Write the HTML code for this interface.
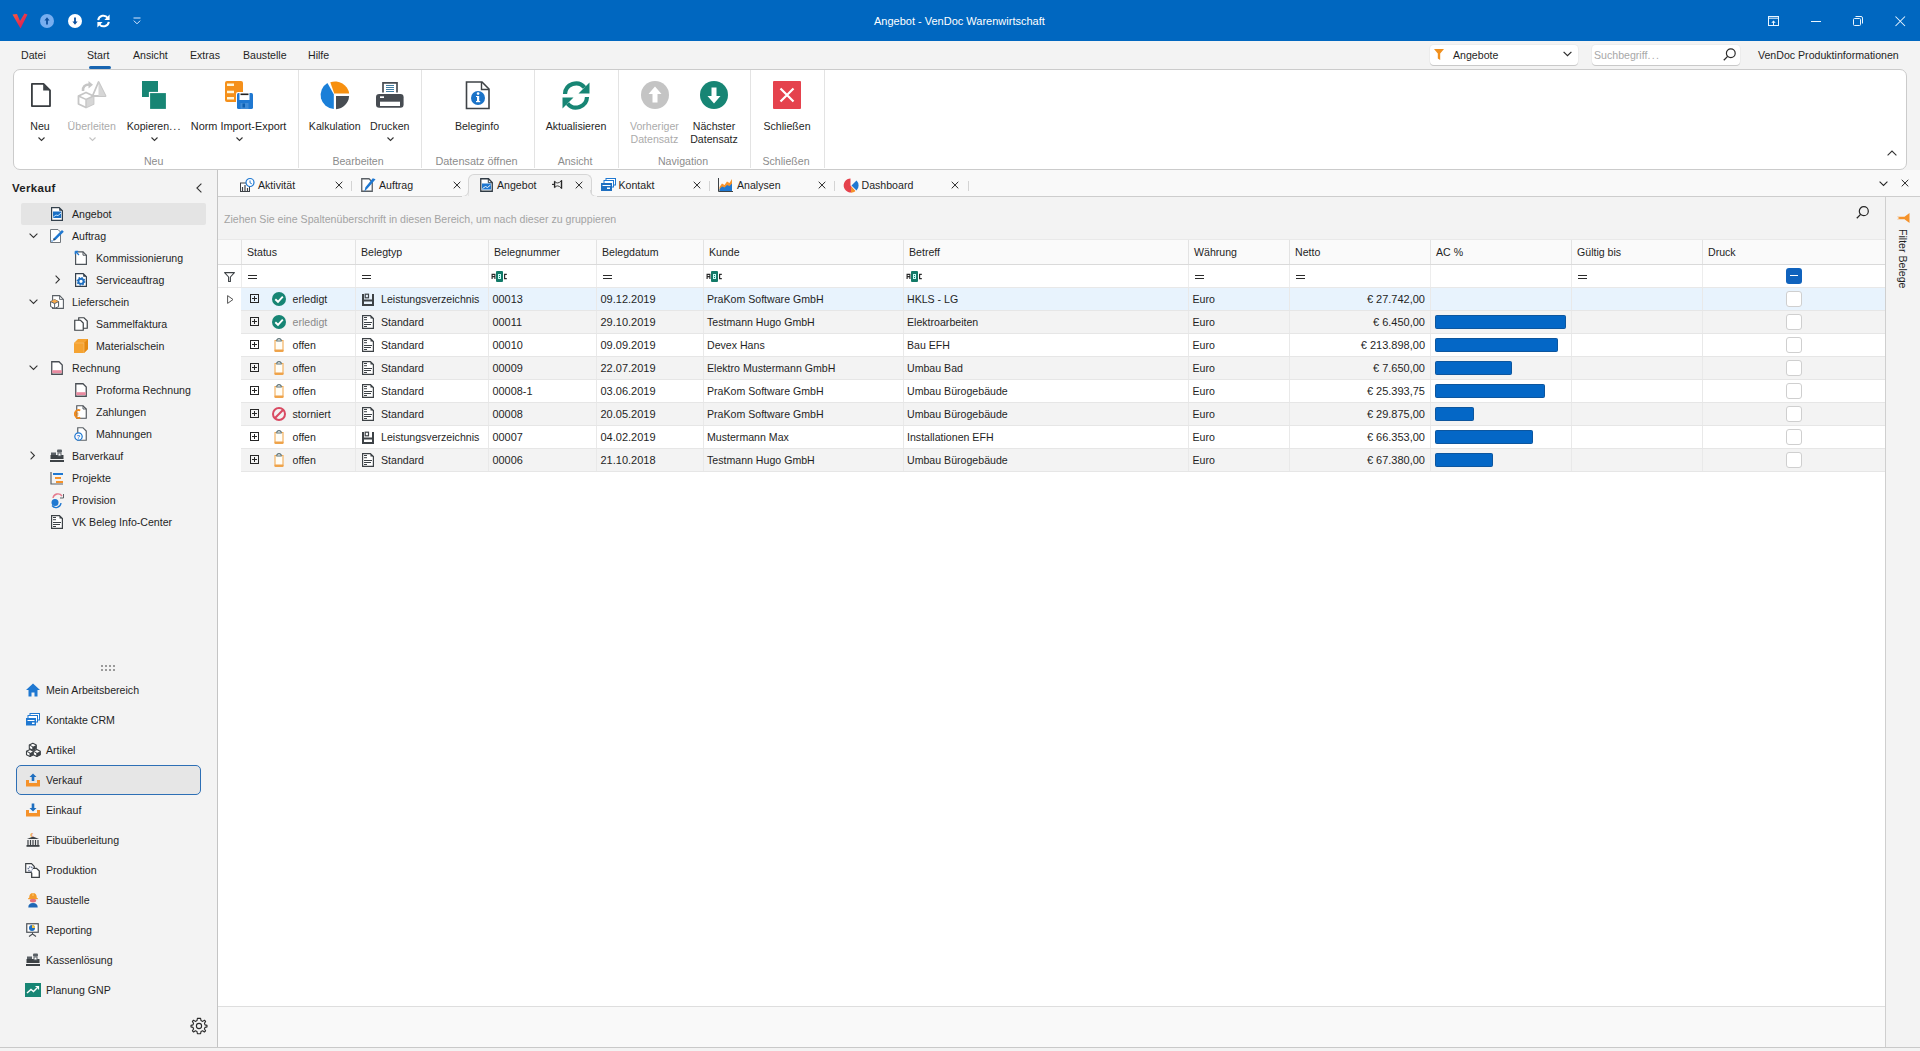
<!DOCTYPE html>
<html><head><meta charset="utf-8"><title>Angebot - VenDoc Warenwirtschaft</title>
<style>
html,body{margin:0;padding:0;}
body{width:1920px;height:1051px;overflow:hidden;position:relative;background:#f3f3f3;font-family:"Liberation Sans",sans-serif;}
.t{position:absolute;white-space:nowrap;}
.r{position:absolute;}
svg.r{overflow:visible;}
</style></head><body>

<div class="r" style="left:0px;top:0px;width:1920px;height:41px;background:#0067c0;"></div>
<svg class="r" style="left:12px;top:13px;" width="16" height="16" viewBox="0 0 16 16"><defs><linearGradient id="vg" x1="0" y1="0" x2="1" y2="1"><stop offset="0" stop-color="#ff5a3c"/><stop offset="1" stop-color="#d0105a"/></linearGradient></defs><path d="M0.5 1.5 L5 1 L8 8 L12.5 0.5 L15.5 1.5 L8.5 15.5 Z" fill="url(#vg)"/></svg>
<svg class="r" style="left:40px;top:14px;" width="14" height="14" viewBox="0 0 14 14"><circle cx="7" cy="7" r="7" fill="#77aef0"/><path d="M7 3.2 L9.6 6.6 H7.9 V10.6 H6.1 V6.6 H4.4 Z" fill="#0b4f9e"/></svg>
<svg class="r" style="left:68px;top:14px;" width="14" height="14" viewBox="0 0 14 14"><circle cx="7" cy="7" r="7" fill="#ffffff"/><path d="M7 10.8 L9.6 7.4 H7.9 V3.4 H6.1 V7.4 H4.4 Z" fill="#0b4f9e"/></svg>
<svg class="r" style="left:96px;top:14px;" width="15" height="14" viewBox="0 0 15 14"><path d="M2.2 6.2 A5.3 5.3 0 0 1 11.8 4" fill="none" stroke="#fff" stroke-width="2"/><path d="M13.6 0.6 L13.6 6 L8.4 6 Z" fill="#fff"/><path d="M12.8 7.8 A5.3 5.3 0 0 1 3.2 10" fill="none" stroke="#fff" stroke-width="2"/><path d="M1.4 13.4 L1.4 8 L6.6 8 Z" fill="#fff"/></svg>
<svg class="r" style="left:133px;top:17px;" width="8" height="8" viewBox="0 0 8 8"><path d="M0.5 1 H7.5" stroke="#dbe9ff" stroke-width="1"/><path d="M0.8 3.6 L4 6.8 L7.2 3.6" fill="none" stroke="#dbe9ff" stroke-width="1"/></svg>
<div class="t" style="left:874px;top:15.69px;font-size:11px;line-height:11px;color:#ffffff;">Angebot - VenDoc Warenwirtschaft</div>
<svg class="r" style="left:1768px;top:16px;" width="11" height="10" viewBox="0 0 11 10"><rect x="0.5" y="0.5" width="10" height="9" fill="none" stroke="#eaf6ff" stroke-width="1"/><path d="M0.5 2.2 H10.5" stroke="#eaf6ff"/><path d="M5.5 9.5 V5.2" stroke="#eaf6ff" stroke-width="1"/><path d="M3.3 6.8 L5.5 4.4 L7.7 6.8 Z" fill="#eaf6ff"/></svg>
<div class="r" style="left:1811px;top:21px;width:10px;height:1px;background:#eaf6ff;"></div>
<svg class="r" style="left:1853px;top:16px;" width="10" height="10" viewBox="0 0 10 10"><rect x="0.5" y="2.5" width="7" height="7" rx="1" fill="none" stroke="#eaf6ff"/><path d="M2.5 0.5 H8 A1.5 1.5 0 0 1 9.5 2 V7.5" fill="none" stroke="#eaf6ff"/></svg>
<svg class="r" style="left:1895px;top:16px;" width="10.5" height="10.5" viewBox="0 0 10.5 10.5"><path d="M0.5 0.5 L10 10 M10 0.5 L0.5 10" stroke="#eaf6ff" stroke-width="1.05"/></svg>
<div class="t" style="left:21px;top:50.03px;font-size:10.6px;line-height:10.6px;color:#1f1f1f;">Datei</div>
<div class="t" style="left:87px;top:50.03px;font-size:10.6px;line-height:10.6px;color:#1f1f1f;">Start</div>
<div class="t" style="left:133px;top:50.03px;font-size:10.6px;line-height:10.6px;color:#1f1f1f;">Ansicht</div>
<div class="t" style="left:190px;top:50.03px;font-size:10.6px;line-height:10.6px;color:#1f1f1f;">Extras</div>
<div class="t" style="left:243px;top:50.03px;font-size:10.6px;line-height:10.6px;color:#1f1f1f;">Baustelle</div>
<div class="t" style="left:308px;top:50.03px;font-size:10.6px;line-height:10.6px;color:#1f1f1f;">Hilfe</div>
<div class="r" style="left:89px;top:66px;width:22px;height:3px;background:#1764b0;border-radius:1.5px;"></div>
<div class="r" style="left:1430px;top:45px;width:148px;height:20px;background:#ffffff;border-radius:4px;box-shadow:0 1px 0 #c9c9c9, 0 0 0 1px #ececec;"></div>
<svg class="r" style="left:1434px;top:49px;" width="10" height="11" viewBox="0 0 10 11"><path d="M0 0 H10 L6.2 4.6 V11 L3.8 9.6 V4.6 Z" fill="#f0901e"/></svg>
<div class="t" style="left:1453px;top:50.03px;font-size:10.6px;line-height:10.6px;color:#1f1f1f;">Angebote</div>
<svg class="r" style="left:1563px;top:51px;" width="9" height="6" viewBox="0 0 9 6"><path d="M0.6 0.8 L4.5 4.7 L8.4 0.8" fill="none" stroke="#2b2b2b" stroke-width="1.2"/></svg>
<div class="r" style="left:1592px;top:45px;width:148px;height:20px;background:#ffffff;border-radius:4px;box-shadow:0 1px 0 #c9c9c9, 0 0 0 1px #ececec;"></div>
<div class="t" style="left:1594px;top:50.03px;font-size:10.6px;line-height:10.6px;color:#a8a8a8;">Suchbegriff<span style="letter-spacing:1.4px">...</span></div>
<svg class="r" style="left:1723px;top:48px;" width="13" height="13" viewBox="0 0 13 13"><circle cx="7.8" cy="5.2" r="4.4" fill="none" stroke="#2b2b2b" stroke-width="1.2"/><path d="M4.6 8.4 L0.8 12.2" stroke="#2b2b2b" stroke-width="1.3"/></svg>
<div class="t" style="left:1758px;top:50.03px;font-size:10.6px;line-height:10.6px;color:#1f1f1f;">VenDoc Produktinformationen</div>
<div class="r" style="left:13px;top:69px;width:1892px;height:99px;background:#ffffff;border:1px solid #cbcbcb;border-radius:7px;"></div>
<div class="r" style="left:298px;top:70px;width:1px;height:98px;background:#e3e3e3;"></div>
<div class="r" style="left:421px;top:70px;width:1px;height:98px;background:#e3e3e3;"></div>
<div class="r" style="left:534px;top:70px;width:1px;height:98px;background:#e3e3e3;"></div>
<div class="r" style="left:618px;top:70px;width:1px;height:98px;background:#e3e3e3;"></div>
<div class="r" style="left:750px;top:70px;width:1px;height:98px;background:#e3e3e3;"></div>
<div class="r" style="left:824px;top:70px;width:1px;height:98px;background:#e3e3e3;"></div>
<div class="t" style="left:-60px;width:200px;text-align:center;top:121.03px;font-size:10.6px;line-height:10.6px;color:#1f1f1f;">Neu</div>
<svg class="r" style="left:37.5px;top:137px;" width="7" height="4" viewBox="0 0 7 4"><path d="M0.5 0.5 L3.5 3.5 L6.5 0.5" fill="none" stroke="#333" stroke-width="1.1"/></svg>
<div class="t" style="left:-8.25px;width:200px;text-align:center;top:121.03px;font-size:10.6px;line-height:10.6px;color:#ababab;">Überleiten</div>
<svg class="r" style="left:88.5px;top:137px;" width="7" height="4" viewBox="0 0 7 4"><path d="M0.5 0.5 L3.5 3.5 L6.5 0.5" fill="none" stroke="#c4c4c4" stroke-width="1.1"/></svg>
<div class="t" style="left:54.30000000000001px;width:200px;text-align:center;top:121.03px;font-size:10.6px;line-height:10.6px;color:#1f1f1f;">Kopieren<span style="letter-spacing:1.3px">...</span></div>
<svg class="r" style="left:150.5px;top:137px;" width="7" height="4" viewBox="0 0 7 4"><path d="M0.5 0.5 L3.5 3.5 L6.5 0.5" fill="none" stroke="#333" stroke-width="1.1"/></svg>
<div class="t" style="left:138.6px;width:200px;text-align:center;top:120.77px;font-size:10.9px;line-height:10.9px;color:#1f1f1f;">Norm Import-Export</div>
<svg class="r" style="left:235.5px;top:137px;" width="7" height="4" viewBox="0 0 7 4"><path d="M0.5 0.5 L3.5 3.5 L6.5 0.5" fill="none" stroke="#333" stroke-width="1.1"/></svg>
<div class="t" style="left:53.69999999999999px;width:200px;text-align:center;top:156.03px;font-size:10.6px;line-height:10.6px;color:#8c8c8c;">Neu</div>
<div class="t" style="left:234.75px;width:200px;text-align:center;top:121.03px;font-size:10.6px;line-height:10.6px;color:#1f1f1f;">Kalkulation</div>
<div class="t" style="left:289.75px;width:200px;text-align:center;top:121.03px;font-size:10.6px;line-height:10.6px;color:#1f1f1f;">Drucken</div>
<svg class="r" style="left:386.5px;top:137px;" width="7" height="4" viewBox="0 0 7 4"><path d="M0.5 0.5 L3.5 3.5 L6.5 0.5" fill="none" stroke="#333" stroke-width="1.1"/></svg>
<div class="t" style="left:258px;width:200px;text-align:center;top:156.03px;font-size:10.6px;line-height:10.6px;color:#8c8c8c;">Bearbeiten</div>
<div class="t" style="left:377px;width:200px;text-align:center;top:121.03px;font-size:10.6px;line-height:10.6px;color:#1f1f1f;">Beleginfo</div>
<div class="t" style="left:376.5px;width:200px;text-align:center;top:155.77px;font-size:10.9px;line-height:10.9px;color:#8c8c8c;">Datensatz öffnen</div>
<div class="t" style="left:476px;width:200px;text-align:center;top:121.03px;font-size:10.6px;line-height:10.6px;color:#1f1f1f;">Aktualisieren</div>
<div class="t" style="left:475px;width:200px;text-align:center;top:156.03px;font-size:10.6px;line-height:10.6px;color:#8c8c8c;">Ansicht</div>
<div class="t" style="left:554.4px;width:200px;text-align:center;top:121.03px;font-size:10.6px;line-height:10.6px;color:#ababab;">Vorheriger</div>
<div class="t" style="left:554.4px;width:200px;text-align:center;top:134.03px;font-size:10.6px;line-height:10.6px;color:#ababab;">Datensatz</div>
<div class="t" style="left:614px;width:200px;text-align:center;top:121.03px;font-size:10.6px;line-height:10.6px;color:#1f1f1f;">Nächster</div>
<div class="t" style="left:614px;width:200px;text-align:center;top:134.03px;font-size:10.6px;line-height:10.6px;color:#1f1f1f;">Datensatz</div>
<div class="t" style="left:583px;width:200px;text-align:center;top:156.03px;font-size:10.6px;line-height:10.6px;color:#8c8c8c;">Navigation</div>
<div class="t" style="left:687px;width:200px;text-align:center;top:121.03px;font-size:10.6px;line-height:10.6px;color:#1f1f1f;">Schließen</div>
<div class="t" style="left:686px;width:200px;text-align:center;top:156.03px;font-size:10.6px;line-height:10.6px;color:#8c8c8c;">Schließen</div>
<svg class="r" style="left:1887px;top:150px;" width="10" height="6" viewBox="0 0 10 6"><path d="M0.6 5.4 L5 1 L9.4 5.4" fill="none" stroke="#333" stroke-width="1.1"/></svg>
<svg class="r" style="left:30px;top:83px;" width="22" height="25" viewBox="0 0 22 25"><path d="M1.9 0.9 H13.5 L20 7.4 V23.1 H1.9 Z" fill="#fff" stroke="#383c40" stroke-width="1.8" stroke-linejoin="round"/><path d="M13.2 0.5 L20.5 7.6 H13.2 Z" fill="#3f4448"/></svg>
<svg class="r" style="left:78px;top:81px;" width="28" height="28" viewBox="0 0 28 28"><path d="M8 11.5 L15.5 15 V23 L8 26.5 L0.5 23 V15 Z" fill="#fff" stroke="#c6c6c6" stroke-width="1.8" stroke-linejoin="round"/><path d="M8 18.5 L15.5 15 V23 L8 26.5 Z" fill="#d6d6d6"/><path d="M0.5 15 L8 18.5 L15.5 15 M8 18.5 V26.5" fill="none" stroke="#c6c6c6" stroke-width="1.4"/><path d="M20.5 1 L14.5 15 H27.5 Z" fill="#fff" stroke="#c6c6c6" stroke-width="1.8" stroke-linejoin="round"/><path d="M20.5 1 L27.5 15 H20.5 Z" fill="#d6d6d6"/><path d="M5 10 Q4.5 3.5 11.5 3.5" fill="none" stroke="#c6c6c6" stroke-width="2.6"/><path d="M10.5 0 L15 3.8 L10.5 7.5 Z" fill="#c6c6c6"/></svg>
<svg class="r" style="left:141px;top:81px;" width="26" height="29" viewBox="0 0 26 29"><rect x="1" y="0" width="16" height="16" fill="#178574"/><rect x="8.5" y="11.5" width="17" height="17" fill="#178574" stroke="#fff" stroke-width="1.2"/></svg>
<svg class="r" style="left:224px;top:81px;" width="30" height="29" viewBox="0 0 30 29"><rect x="1" y="0" width="18" height="21" rx="2" fill="#f5901a"/><rect x="3" y="2.5" width="7" height="2.5" fill="#fff6d8"/><rect x="3" y="9.7" width="7" height="2.5" fill="#fff6d8"/><rect x="3" y="16" width="7" height="2.5" fill="#fff6d8"/><rect x="12" y="11" width="18" height="18" rx="2" fill="#fff"/><rect x="13" y="12" width="16" height="16" rx="1.6" fill="#1f78d1"/><rect x="15.5" y="12" width="10" height="7" fill="#fff"/><rect x="16.5" y="12.5" width="8" height="1.6" fill="#222"/><rect x="16.5" y="22" width="8" height="6" fill="#fff" opacity="0.15"/><rect x="18.5" y="22.5" width="2.5" height="4" fill="#0d5fb0"/></svg>
<svg class="r" style="left:320px;top:81px;" width="30" height="29" viewBox="0 0 30 29"><path d="M13.8 13.3 L7.4 2 A14 14 0 0 0 13.8 28 Z" fill="#1a7fd8"/><path d="M14.2 12.6 L10.3 1.3 A14.2 14.2 0 0 1 29.2 12.6 Z" fill="#f7900f"/><path d="M16 15 H29.1 A14 14 0 0 1 16 28.2 Z" fill="#474c52"/></svg>
<svg class="r" style="left:375px;top:81px;" width="30" height="29" viewBox="0 0 30 29"><path d="M8 11.6 V1.9 H22 V11.6" fill="#fff" stroke="#474c52" stroke-width="1.7"/><rect x="11" y="4" width="8" height="0.9" fill="#2c6f98"/><rect x="11" y="6" width="8" height="0.9" fill="#2c6f98"/><rect x="11" y="8" width="8" height="0.9" fill="#2c6f98"/><rect x="11" y="10" width="8" height="0.9" fill="#2c6f98"/><rect x="1" y="13" width="27.6" height="13.8" rx="3.2" fill="#474c52"/><rect x="5" y="20.7" width="20" height="4.3" fill="#fff"/><rect x="5" y="15.3" width="4" height="1.7" fill="#fff"/></svg>
<svg class="r" style="left:465px;top:81px;" width="26" height="29" viewBox="0 0 26 29"><path d="M1.5 1 H17 L24 8 V27.5 H1.5 Z" fill="#fff" stroke="#3f4347" stroke-width="1.6"/><path d="M16.5 1 V8.5 H24" fill="none" stroke="#3f4347" stroke-width="1.4"/><circle cx="13" cy="17" r="7" fill="#1a73c8"/><rect x="12" y="15" width="2.2" height="6" fill="#fff"/><rect x="11" y="20" width="4.2" height="1.2" fill="#fff"/><rect x="11" y="15" width="2" height="1" fill="#fff"/><circle cx="13.1" cy="12.6" r="1.3" fill="#fff"/></svg>
<svg class="r" style="left:561px;top:81px;" width="30" height="29" viewBox="0 0 30 29"><path d="M4 13 A11 11 0 0 1 23.5 6.5" fill="none" stroke="#178574" stroke-width="4.2"/><path d="M28.5 1.5 V12.5 H17.5 Z" fill="#178574"/><path d="M26 16 A11 11 0 0 1 6.5 22.5" fill="none" stroke="#178574" stroke-width="4.2"/><path d="M1.5 27.5 V16.5 H12.5 Z" fill="#178574"/></svg>
<svg class="r" style="left:641px;top:81px;" width="28" height="28" viewBox="0 0 28 28"><circle cx="14" cy="14" r="14" fill="#c4c4c4"/><path d="M14 5.5 L20.5 13 H16.5 V21.5 H11.5 V13 H7.5 Z" fill="#fff"/></svg>
<svg class="r" style="left:700px;top:81px;" width="28" height="28" viewBox="0 0 28 28"><circle cx="14" cy="14" r="14" fill="#178574"/><path d="M14 22.5 L20.5 15 H16.5 V6.5 H11.5 V15 H7.5 Z" fill="#fff"/></svg>
<svg class="r" style="left:773px;top:81px;" width="28" height="28" viewBox="0 0 28 28"><rect x="0" y="0" width="28" height="28" rx="1" fill="#e5424d"/><path d="M7.5 7.5 L20.5 20.5 M20.5 7.5 L7.5 20.5" stroke="#fff" stroke-width="2.2"/></svg>
<div class="r" style="left:217px;top:170px;width:1px;height:877px;background:#c4c4c4;"></div>
<div class="t" style="left:12px;top:183.27px;font-size:11.5px;line-height:11.5px;color:#1f1f1f;font-weight:bold;letter-spacing:0.3px;">Verkauf</div>
<svg class="r" style="left:196px;top:183px;" width="6" height="10" viewBox="0 0 6 10"><path d="M5.4 0.6 L0.9 5 L5.4 9.4" fill="none" stroke="#333" stroke-width="1.1"/></svg>
<div class="r" style="left:21px;top:203px;width:185px;height:22px;background:#e4e4e4;border-radius:2px;"></div>
<svg class="r" style="left:51px;top:207px;" width="13" height="14" viewBox="0 0 13 14"><path d="M0.6 0.6 H8.2 L11.4 3.8 V13.4 H0.6 Z" fill="#fff" stroke="#34404c" stroke-width="1.2"/><path d="M8.2 0.6 L11.4 3.8 H8.2 Z" fill="#34404c"/><rect x="2" y="4.5" width="8.2" height="6.5" fill="#1a6fc4"/><path d="M2.2 10.2 L5 8 L7 8.6 L10 6" stroke="#bfe3ff" stroke-width="1" fill="none"/></svg>
<div class="t" style="left:72px;top:209.03px;font-size:10.6px;line-height:10.6px;color:#1f1f1f;">Angebot</div>
<svg class="r" style="left:29px;top:233px;" width="9" height="5" viewBox="0 0 9 5"><path d="M0.6 0.6 L4.5 4.4 L8.4 0.6" fill="none" stroke="#333" stroke-width="1.1"/></svg>
<svg class="r" style="left:50px;top:229px;" width="15" height="14" viewBox="0 0 15 14"><path d="M0.5 0.5 H8 L10.5 3 V13.5 H0.5 Z" fill="#fff" stroke="#70767c" stroke-width="1"/><path d="M13.8 2.8 L5.5 11 L3.2 11.6 L3.8 9.3 L12 1 Z" fill="#1f78d1"/><path d="M3.8 9.3 L3.2 11.6 L5.5 11 Z" fill="#3d4246"/><circle cx="2" cy="12" r="0.8" fill="#1f78d1"/></svg>
<div class="t" style="left:72px;top:231.03px;font-size:10.6px;line-height:10.6px;color:#1f1f1f;">Auftrag</div>
<svg class="r" style="left:75px;top:251px;" width="13" height="14" viewBox="0 0 13 14"><path d="M1.6 0.8 H8 L11.4 4.2 V13.4 H0.6 V2" fill="#fff" stroke="#4f555b" stroke-width="1.2"/><path d="M8 0.8 V4.2 H11.4" fill="none" stroke="#4f555b" stroke-width="1"/><path d="M0.3 0.3 L4 4 M0.3 0.3 H3.2 M0.3 0.3 V3.2" stroke="#1f78d1" stroke-width="1.3" fill="none"/></svg>
<div class="t" style="left:96px;top:253.03px;font-size:10.6px;line-height:10.6px;color:#1f1f1f;">Kommissionierung</div>
<svg class="r" style="left:55px;top:275px;" width="5" height="9" viewBox="0 0 5 9"><path d="M0.6 0.6 L4.4 4.5 L0.6 8.4" fill="none" stroke="#333" stroke-width="1.1"/></svg>
<svg class="r" style="left:75px;top:273px;" width="13" height="14" viewBox="0 0 13 14"><path d="M0.6 0.6 H8.2 L11.4 3.8 V13.4 H0.6 Z" fill="#fff" stroke="#34404c" stroke-width="1.2"/><path d="M8.2 0.6 L11.4 3.8 H8.2 Z" fill="#34404c"/><circle cx="6" cy="8.3" r="2.6" fill="none" stroke="#1f6fc0" stroke-width="1.9"/><circle cx="6" cy="8.3" r="3.7" fill="none" stroke="#1f6fc0" stroke-width="1.4" stroke-dasharray="1.4 1.5"/></svg>
<div class="t" style="left:96px;top:275.03px;font-size:10.6px;line-height:10.6px;color:#1f1f1f;">Serviceauftrag</div>
<svg class="r" style="left:29px;top:299px;" width="9" height="5" viewBox="0 0 9 5"><path d="M0.6 0.6 L4.5 4.4 L8.4 0.6" fill="none" stroke="#333" stroke-width="1.1"/></svg>
<svg class="r" style="left:50px;top:295px;" width="14" height="14" viewBox="0 0 14 14"><path d="M2.6 0.6 H9.6 L13.4 4.4 V13.4 H2.6 Z" fill="#fff" stroke="#5a6066" stroke-width="1.1"/><path d="M9.6 0.6 V4.4 H13.4" fill="none" stroke="#5a6066" stroke-width="0.9"/><path d="M0.6 6.6 L4.6 4.6 L8.6 6.6 V11.6 L4.6 13.4 L0.6 11.6 Z" fill="#fff" stroke="#4f555b" stroke-width="1"/><path d="M0.6 6.6 L4.6 4.6 L8.6 6.6 L4.6 8.6 Z" fill="#f5a84a"/><path d="M0.6 6.6 L4.6 8.6 L8.6 6.6 M4.6 8.6 V13.4" stroke="#4f555b" stroke-width="0.9" fill="none"/></svg>
<div class="t" style="left:72px;top:297.03px;font-size:10.6px;line-height:10.6px;color:#1f1f1f;">Lieferschein</div>
<svg class="r" style="left:74px;top:317px;" width="14" height="14" viewBox="0 0 14 14"><path d="M4.75 0.75 H10 L13.25 4 V11.25 H4.75 Z" fill="#fff" stroke="#3d4246" stroke-width="1.2"/><path d="M0.75 3.25 H6.5 L9.25 6 V13.25 H0.75 Z" fill="#fff" stroke="#3d4246" stroke-width="1.2"/></svg>
<div class="t" style="left:96px;top:319.03px;font-size:10.6px;line-height:10.6px;color:#1f1f1f;">Sammelfaktura</div>
<svg class="r" style="left:74px;top:339px;" width="14" height="14" viewBox="0 0 14 14"><path d="M0 4 L4 0 H14 L14 10 L10 14 H0 Z" fill="#f5a331"/><path d="M10 4 L14 0 V10 L10 14 Z" fill="#e58a12"/><path d="M0 4 H10 V14" fill="none" stroke="#f9c278" stroke-width="0.6"/></svg>
<div class="t" style="left:96px;top:341.03px;font-size:10.6px;line-height:10.6px;color:#1f1f1f;">Materialschein</div>
<svg class="r" style="left:29px;top:365px;" width="9" height="5" viewBox="0 0 9 5"><path d="M0.6 0.6 L4.5 4.4 L8.4 0.6" fill="none" stroke="#333" stroke-width="1.1"/></svg>
<svg class="r" style="left:51px;top:361px;" width="12" height="14" viewBox="0 0 12 14"><path d="M0.75 0.75 H8 L11.25 4 V13.25 H0.75 Z" fill="#fff" stroke="#4a4f55" stroke-width="1.3"/><rect x="1.3" y="9.2" width="9.4" height="2.9" fill="#e98aa0"/></svg>
<div class="t" style="left:72px;top:363.03px;font-size:10.6px;line-height:10.6px;color:#1f1f1f;">Rechnung</div>
<svg class="r" style="left:75px;top:383px;" width="12" height="14" viewBox="0 0 12 14"><path d="M0.75 0.75 H8 L11.25 4 V13.25 H0.75 Z" fill="#fff" stroke="#4a4f55" stroke-width="1.3"/><rect x="1.3" y="9.2" width="9.4" height="2.9" fill="#e98aa0"/></svg>
<div class="t" style="left:96px;top:385.03px;font-size:10.6px;line-height:10.6px;color:#1f1f1f;">Proforma Rechnung</div>
<svg class="r" style="left:74px;top:405px;" width="14" height="14" viewBox="0 0 14 14"><path d="M2.75 0.75 H9 L12.25 4 V13.25 H2.75 Z" fill="#fff" stroke="#4a4f55" stroke-width="1.1"/><path d="M9 0.75 V4 H12.25" fill="none" stroke="#4a4f55" stroke-width="0.9"/><path d="M6.2 5.6 A3.4 4 0 1 0 6.2 12.4" fill="none" stroke="#f08a1c" stroke-width="1.8"/><path d="M0 8.2 H4.4 M0 10 H4.4" stroke="#f08a1c" stroke-width="1"/></svg>
<div class="t" style="left:96px;top:407.03px;font-size:10.6px;line-height:10.6px;color:#1f1f1f;">Zahlungen</div>
<svg class="r" style="left:74px;top:427px;" width="14" height="14" viewBox="0 0 14 14"><path d="M3.75 0.75 H9 L12.25 4 V13.25 H3.75 Z" fill="#fff" stroke="#5a6066" stroke-width="1.2"/><circle cx="4.5" cy="9.5" r="3.7" fill="#fff" stroke="#1f78d1" stroke-width="1.2"/><text x="2.6" y="12" font-family="Liberation Sans" font-weight="bold" font-size="6" fill="#1f78d1">?</text></svg>
<div class="t" style="left:96px;top:429.03px;font-size:10.6px;line-height:10.6px;color:#1f1f1f;">Mahnungen</div>
<svg class="r" style="left:30px;top:451px;" width="5" height="9" viewBox="0 0 5 9"><path d="M0.6 0.6 L4.4 4.5 L0.6 8.4" fill="none" stroke="#333" stroke-width="1.1"/></svg>
<svg class="r" style="left:50px;top:449px;" width="14" height="13" viewBox="0 0 14 13"><rect x="7" y="0.5" width="5" height="3" rx="1" fill="#5a6066"/><rect x="1" y="3.5" width="5" height="4" fill="#5a6066"/><path d="M0.5 6 H13.5 V10 H0.5 Z" fill="#3d4246"/><rect x="0" y="11" width="14" height="2" fill="#3d4246"/><rect x="8" y="4" width="3" height="3" fill="#fff" stroke="#5a6066"/></svg>
<div class="t" style="left:72px;top:451.03px;font-size:10.6px;line-height:10.6px;color:#1f1f1f;">Barverkauf</div>
<svg class="r" style="left:50px;top:471px;" width="14" height="14" viewBox="0 0 14 14"><path d="M1 1 V13 H13" fill="none" stroke="#5a6066" stroke-width="1.2"/><rect x="3" y="2" width="10" height="2" fill="#1f78d1"/><rect x="5" y="6" width="6" height="2" fill="#f5922a"/><rect x="6" y="10" width="7" height="2" fill="#f5922a"/></svg>
<div class="t" style="left:72px;top:473.03px;font-size:10.6px;line-height:10.6px;color:#1f1f1f;">Projekte</div>
<svg class="r" style="left:50px;top:493px;" width="14" height="14" viewBox="0 0 14 14"><path d="M3 5 A5 5 0 0 1 12 3" fill="none" stroke="#e5788c" stroke-width="1.3"/><path d="M13.5 1 V5 H10" fill="none" stroke="#5a6066" stroke-width="1"/><circle cx="5" cy="9.5" r="3.5" fill="#1f78d1"/><path d="M2 12.5 A5 5 0 0 0 11 10" fill="none" stroke="#1f78d1" stroke-width="1.3"/></svg>
<div class="t" style="left:72px;top:495.03px;font-size:10.6px;line-height:10.6px;color:#1f1f1f;">Provision</div>
<svg class="r" style="left:51px;top:515px;" width="12" height="14" viewBox="0 0 12 14"><path d="M0.6 0.6 H8.4 L11.4 3.6 V13.4 H0.6 Z" fill="#fff" stroke="#3d4246" stroke-width="1.2"/><path d="M8.5 0.5 L11.5 3.5 L8.5 3.5 Z" fill="#3d4246"/><rect x="2" y="2" width="3" height="1" fill="#3d4246"/><rect x="2" y="4.2" width="3" height="1" fill="#3d4246"/><rect x="2" y="7" width="8" height="1" fill="#3d4246"/><rect x="2" y="9" width="7" height="1" fill="#3d4246"/><rect x="2" y="11" width="3" height="1" fill="#3d4246"/></svg>
<div class="t" style="left:72px;top:517.03px;font-size:10.6px;line-height:10.6px;color:#1f1f1f;">VK Beleg Info-Center</div>
<div class="r" style="left:101px;top:665px;width:1.5px;height:1.5px;background:#9a9a9a;"></div>
<div class="r" style="left:105px;top:665px;width:1.5px;height:1.5px;background:#9a9a9a;"></div>
<div class="r" style="left:109px;top:665px;width:1.5px;height:1.5px;background:#9a9a9a;"></div>
<div class="r" style="left:113px;top:665px;width:1.5px;height:1.5px;background:#9a9a9a;"></div>
<div class="r" style="left:101px;top:669px;width:1.5px;height:1.5px;background:#9a9a9a;"></div>
<div class="r" style="left:105px;top:669px;width:1.5px;height:1.5px;background:#9a9a9a;"></div>
<div class="r" style="left:109px;top:669px;width:1.5px;height:1.5px;background:#9a9a9a;"></div>
<div class="r" style="left:113px;top:669px;width:1.5px;height:1.5px;background:#9a9a9a;"></div>
<div class="r" style="left:16px;top:765px;width:183px;height:28px;background:#e6e6e6;border:1px solid #2d6fb5;border-radius:5px;"></div>
<svg class="r" style="left:26px;top:683px;" width="14" height="14" viewBox="0 0 14 14"><path d="M7 0.5 L14 7 H11.5 V13.5 H8.5 V9.5 H5.5 V13.5 H2.5 V7 H0 Z" fill="#1f78d1"/></svg>
<div class="t" style="left:46px;top:685.03px;font-size:10.6px;line-height:10.6px;color:#1f1f1f;">Mein Arbeitsbereich</div>
<svg class="r" style="left:26px;top:713px;" width="14" height="13" viewBox="0 0 14 13"><rect x="4" y="0.5" width="9.5" height="6.5" fill="#fff" stroke="#1f78d1"/><rect x="2" y="2.5" width="9.5" height="6.5" fill="#fff" stroke="#1f78d1"/><rect x="0" y="5" width="10" height="7.5" fill="#1f78d1"/><rect x="1.5" y="7" width="7" height="1" fill="#fff"/><rect x="6" y="9.5" width="2.5" height="1.5" fill="#fff"/></svg>
<div class="t" style="left:46px;top:715.03px;font-size:10.6px;line-height:10.6px;color:#1f1f1f;">Kontakte CRM</div>
<svg class="r" style="left:26px;top:743px;" width="15" height="14" viewBox="0 0 15 14"><path d="M6.8 0.3 L10.3 2.05 V5.55 L6.8 7.3 L3.3 5.55 V2.05 Z" fill="#fff" stroke="#3d4246" stroke-width="1.1" stroke-linejoin="round"/><path d="M6.8 3.8 L10.3 2.05 V5.55 L6.8 7.3 Z" fill="#3d4246"/><path d="M3.3 2.05 L6.8 3.8 V7.3" stroke="#3d4246" stroke-width="1" fill="none"/><path d="M4.0 6.5 L7.5 8.25 V11.75 L4.0 13.5 L0.5 11.75 V8.25 Z" fill="#fff" stroke="#3d4246" stroke-width="1.1" stroke-linejoin="round"/><path d="M4.0 10.0 L7.5 8.25 V11.75 L4.0 13.5 Z" fill="#3d4246"/><path d="M0.5 8.25 L4.0 10.0 V13.5" stroke="#3d4246" stroke-width="1" fill="none"/><path d="M10.8 6.5 L14.3 8.25 V11.75 L10.8 13.5 L7.3 11.75 V8.25 Z" fill="#fff" stroke="#3d4246" stroke-width="1.1" stroke-linejoin="round"/><path d="M10.8 10.0 L14.3 8.25 V11.75 L10.8 13.5 Z" fill="#3d4246"/><path d="M7.3 8.25 L10.8 10.0 V13.5" stroke="#3d4246" stroke-width="1" fill="none"/></svg>
<div class="t" style="left:46px;top:745.03px;font-size:10.6px;line-height:10.6px;color:#1f1f1f;">Artikel</div>
<svg class="r" style="left:26px;top:773px;" width="14" height="14" viewBox="0 0 14 14"><path d="M0 7 H3 V10 H11 V7 H14 V13.5 H0 Z" fill="#f5922a"/><path d="M7 0.5 L10.5 4 H8.3 V8 H5.7 V4 H3.5 Z" fill="#1f6fc0"/></svg>
<div class="t" style="left:46px;top:775.03px;font-size:10.6px;line-height:10.6px;color:#1f1f1f;">Verkauf</div>
<svg class="r" style="left:26px;top:803px;" width="14" height="14" viewBox="0 0 14 14"><path d="M0 7 H3 V10 H11 V7 H14 V13.5 H0 Z" fill="#f5922a"/><path d="M7 8.5 L10.5 5 H8.3 V0.5 H5.7 V5 H3.5 Z" fill="#1f6fc0"/></svg>
<div class="t" style="left:46px;top:805.03px;font-size:10.6px;line-height:10.6px;color:#1f1f1f;">Einkauf</div>
<svg class="r" style="left:26px;top:833px;" width="14" height="14" viewBox="0 0 14 14"><path d="M1 6 L7 3.5 L13 6 Z" fill="#3d4246"/><path d="M2 7 V12 M4.5 7 V12 M7 7 V12 M9.5 7 V12 M12 7 V12" stroke="#3d4246" stroke-width="1.2"/><rect x="0.5" y="12" width="13" height="1.8" fill="#3d4246"/><text x="4.5" y="4" font-family="Liberation Sans" font-size="5" fill="#f08a1c">€</text></svg>
<div class="t" style="left:46px;top:835.03px;font-size:10.6px;line-height:10.6px;color:#1f1f1f;">Fibuüberleitung</div>
<svg class="r" style="left:25px;top:863px;" width="15" height="15" viewBox="0 0 15 15"><path d="M0.7 0.7 H6.5 L9.3 3.5 V9.3 H0.7 Z" fill="#fff" stroke="#3d4246" stroke-width="1.2"/><circle cx="5.5" cy="6" r="2.2" fill="none" stroke="#6b7a9a" stroke-width="1.6" stroke-dasharray="1.2 0.8"/><path d="M8 5.3 H11.5 L14.3 8.1 V14.3 H6.7 V9.8" fill="#fff" stroke="#3d4246" stroke-width="1.3"/></svg>
<div class="t" style="left:46px;top:865.03px;font-size:10.6px;line-height:10.6px;color:#1f1f1f;">Produktion</div>
<svg class="r" style="left:28px;top:892px;" width="11" height="16" viewBox="0 0 11 16"><path d="M1.2 6 Q1.2 1 5 1 Q8.8 1 8.8 6 H9.8 V7.2 H0.2 V6 Z" fill="#f39a2a"/><path d="M4.3 1 H5.7 V4 H4.3 Z" fill="#f7c066"/><ellipse cx="5" cy="8.6" rx="3.2" ry="1.9" fill="#e5707a"/><path d="M0.3 15.5 Q0.3 11 5 11 Q9.7 11 9.7 15.5 Z" fill="#1f67b5"/></svg>
<div class="t" style="left:46px;top:895.03px;font-size:10.6px;line-height:10.6px;color:#1f1f1f;">Baustelle</div>
<svg class="r" style="left:26px;top:923px;" width="13" height="14" viewBox="0 0 13 14"><rect x="0.75" y="0.75" width="11.5" height="8.5" fill="#fff" stroke="#4a4f55" stroke-width="1.2"/><circle cx="6" cy="5" r="3" fill="#1f6fc0"/><path d="M6 5 V2 A3 3 0 0 1 9 5 Z" fill="#f5c342"/><path d="M6.5 9.5 V11 M3 13.5 L6.5 11 L10 13.5" stroke="#4a4f55" stroke-width="1.1" fill="none"/></svg>
<div class="t" style="left:46px;top:925.03px;font-size:10.6px;line-height:10.6px;color:#1f1f1f;">Reporting</div>
<svg class="r" style="left:26px;top:953px;" width="14" height="13" viewBox="0 0 14 13"><rect x="7" y="0.5" width="5" height="3" rx="1" fill="#5a6066"/><rect x="1" y="3.5" width="5" height="4" fill="#5a6066"/><path d="M0.5 6 H13.5 V10 H0.5 Z" fill="#3d4246"/><rect x="0" y="11" width="14" height="2" fill="#3d4246"/><rect x="8" y="4" width="3" height="3" fill="#fff" stroke="#5a6066"/></svg>
<div class="t" style="left:46px;top:955.03px;font-size:10.6px;line-height:10.6px;color:#1f1f1f;">Kassenlösung</div>
<svg class="r" style="left:25px;top:983px;" width="16" height="14" viewBox="0 0 16 14"><rect x="0" y="0" width="16" height="14" fill="#178574"/><path d="M2 10 L6 6.5 L8.5 8.5 L13 4" fill="none" stroke="#fff" stroke-width="1.4"/><path d="M10.5 3.5 H13.5 V6.5" fill="none" stroke="#fff" stroke-width="1.2"/></svg>
<div class="t" style="left:46px;top:985.03px;font-size:10.6px;line-height:10.6px;color:#1f1f1f;">Planung GNP</div>
<svg class="r" style="left:190px;top:1017px;" width="18" height="18" viewBox="0 0 18 18"><path d="M9 1.2 L10.6 1.4 L11 3.6 L12.6 4.4 L14.5 3.2 L15.6 4.4 L14.5 6.3 L15 7.9 L17 8.4 V9.9 L15 10.4 L14.4 12 L15.6 13.8 L14.4 15 L12.6 13.8 L11 14.6 L10.6 16.7 H9 H7.4 L7 14.6 L5.4 13.8 L3.6 15 L2.4 13.8 L3.6 12 L3 10.4 L1 9.9 V8.4 L3 7.9 L3.5 6.3 L2.4 4.4 L3.5 3.2 L5.4 4.4 L7 3.6 L7.4 1.4 Z" fill="none" stroke="#2b2b2b" stroke-width="1.1" stroke-linejoin="round"/><circle cx="9" cy="9" r="2.6" fill="none" stroke="#2b2b2b" stroke-width="1.1"/></svg>
<div class="r" style="left:218px;top:170px;width:1702px;height:26px;background:#f9f9f9;"></div>
<div class="r" style="left:218px;top:196px;width:1702px;height:1px;background:#cdcdcd;"></div>
<div class="r" style="left:468px;top:174px;width:122px;height:23px;background:#f3f3f3;border:1px solid #d6d6d6;border-bottom:none;border-radius:6px 6px 0 0;"></div>
<svg class="r" style="left:462px;top:190px;" width="7" height="7" viewBox="0 0 7 7"><path d="M0 6.5 Q6.5 6.5 6.5 0 V7 H0 Z" fill="#f3f3f3"/><path d="M0 6.5 Q6.5 6.5 6.5 0" fill="none" stroke="#d6d6d6"/></svg>
<svg class="r" style="left:590px;top:190px;" width="7" height="7" viewBox="0 0 7 7"><path d="M7 6.5 Q0.5 6.5 0.5 0 V7 H7 Z" fill="#f3f3f3"/><path d="M7 6.5 Q0.5 6.5 0.5 0" fill="none" stroke="#d6d6d6"/></svg>
<div class="r" style="left:462px;top:196px;width:135px;height:1px;background:#f3f3f3;"></div>
<svg class="r" style="left:240px;top:178px;" width="15" height="14" viewBox="0 0 15 14"><rect x="0.5" y="5" width="9" height="8.5" fill="#fff" stroke="#3d4246"/><path d="M2.5 13 V9 M5 13 V7 M7.5 13 V10" stroke="#3d4246" stroke-width="1.2"/><circle cx="10" cy="4.5" r="4" fill="#fff" stroke="#1f78d1" stroke-width="1.2"/><path d="M10 2.5 V4.8 L11.8 5.8" stroke="#1f78d1" fill="none"/></svg>
<div class="t" style="left:258px;top:179.53px;font-size:10.6px;line-height:10.6px;color:#1f1f1f;">Aktivität</div>
<svg class="r" style="left:335px;top:181px;" width="8" height="8" viewBox="0 0 8 8"><path d="M0.7 0.8 L7.3 7.4 M7.3 0.8 L0.7 7.4" stroke="#262626" stroke-width="1"/></svg>
<div class="r" style="left:351px;top:181px;width:1px;height:10px;background:#d4d4d4;"></div>
<svg class="r" style="left:361px;top:178px;" width="15" height="14" viewBox="0 0 15 14"><path d="M0.75 0.75 H8 L11.25 4 V13.25 H0.75 Z" fill="#fff" stroke="#5a6066" stroke-width="1.3"/><path d="M13.5 1.5 L6 10 L4.5 11.5 L5 9.5 L12 1 Z" fill="#1f78d1" stroke="#1f78d1" stroke-width="1.2"/></svg>
<div class="t" style="left:379px;top:179.53px;font-size:10.6px;line-height:10.6px;color:#1f1f1f;">Auftrag</div>
<svg class="r" style="left:453px;top:181px;" width="8" height="8" viewBox="0 0 8 8"><path d="M0.7 0.8 L7.3 7.4 M7.3 0.8 L0.7 7.4" stroke="#262626" stroke-width="1"/></svg>
<svg class="r" style="left:480px;top:178px;" width="13" height="14" viewBox="0 0 13 14"><path d="M0.75 0.75 H8.5 L12.25 4.5 V13.25 H0.75 Z" fill="#fff" stroke="#2f3a44" stroke-width="1.3"/><path d="M8.3 0.6 V4.7 H12.4" fill="none" stroke="#2f3a44" stroke-width="1"/><rect x="2" y="5.5" width="9" height="6" fill="#1f78d1"/><path d="M2.5 10.5 L5.5 8.5 L7.5 9.5 L10.5 7" stroke="#fff" stroke-width="0.9" fill="none"/></svg>
<div class="t" style="left:497px;top:179.53px;font-size:10.6px;line-height:10.6px;color:#1f1f1f;">Angebot</div>
<svg class="r" style="left:575px;top:181px;" width="8" height="8" viewBox="0 0 8 8"><path d="M0.7 0.8 L7.3 7.4 M7.3 0.8 L0.7 7.4" stroke="#262626" stroke-width="1"/></svg>
<svg class="r" style="left:601px;top:178px;" width="15" height="13" viewBox="0 0 15 13"><rect x="5" y="0.5" width="9.5" height="6.5" fill="#fff" stroke="#1f78d1"/><rect x="3" y="2.5" width="9.5" height="6.5" fill="#fff" stroke="#1f78d1"/><rect x="0" y="5" width="11" height="8" fill="#1f6fc0"/><rect x="1.5" y="7" width="8" height="1" fill="#fff"/><rect x="6" y="9.5" width="3" height="1.5" fill="#fff"/></svg>
<div class="t" style="left:618.5px;top:179.53px;font-size:10.6px;line-height:10.6px;color:#1f1f1f;">Kontakt</div>
<svg class="r" style="left:693px;top:181px;" width="8" height="8" viewBox="0 0 8 8"><path d="M0.7 0.8 L7.3 7.4 M7.3 0.8 L0.7 7.4" stroke="#262626" stroke-width="1"/></svg>
<div class="r" style="left:709px;top:181px;width:1px;height:10px;background:#d4d4d4;"></div>
<svg class="r" style="left:718px;top:178px;" width="15" height="14" viewBox="0 0 15 14"><path d="M0.5 0 V13.5 H15" fill="none" stroke="#3d4246" stroke-width="1"/><path d="M1.5 9 L4 5.5 L6.5 7 L9 3.5 L11.5 5 L14 1 V13 H1.5 Z" fill="#f5922a"/><path d="M1.5 11 L4 8.5 L6.5 9.5 L9 7 L11.5 8 L14 5.5 V13 H1.5 Z" fill="#1f78d1"/></svg>
<div class="t" style="left:737px;top:179.53px;font-size:10.6px;line-height:10.6px;color:#1f1f1f;">Analysen</div>
<svg class="r" style="left:818px;top:181px;" width="8" height="8" viewBox="0 0 8 8"><path d="M0.7 0.8 L7.3 7.4 M7.3 0.8 L0.7 7.4" stroke="#262626" stroke-width="1"/></svg>
<div class="r" style="left:834px;top:181px;width:1px;height:10px;background:#d4d4d4;"></div>
<svg class="r" style="left:843px;top:178px;" width="15" height="15" viewBox="0 0 15 15"><path d="M7.5 7.5 L7.5 0.5 A7 7 0 1 0 12 13 Z" fill="#e5424d"/><path d="M8.5 7.5 L13.5 2.5 A7 7 0 0 1 13.5 12.5 Z" fill="#1f78d1"/><path d="M8 8.5 L12.5 13 A7 7 0 0 1 8 14.5 Z" fill="#f5922a"/></svg>
<div class="t" style="left:861.5px;top:179.53px;font-size:10.6px;line-height:10.6px;color:#1f1f1f;">Dashboard</div>
<svg class="r" style="left:950.5px;top:181px;" width="8" height="8" viewBox="0 0 8 8"><path d="M0.7 0.8 L7.3 7.4 M7.3 0.8 L0.7 7.4" stroke="#262626" stroke-width="1"/></svg>
<div class="r" style="left:967.5px;top:181px;width:1px;height:10px;background:#d4d4d4;"></div>
<svg class="r" style="left:551px;top:180px;" width="12" height="10" viewBox="0 0 12 10"><path d="M1 4.4 H3.6" stroke="#262626" stroke-width="1.1"/><path d="M3.6 1.2 V7.7" stroke="#262626" stroke-width="1.4"/><path d="M10.5 0.2 V8.7" stroke="#262626" stroke-width="1.4"/><path d="M3.6 1.3 Q6.5 5 10.5 0.6 M3.6 7.6 Q6.5 3.8 10.5 8.3" fill="none" stroke="#262626" stroke-width="0.9"/></svg>
<svg class="r" style="left:1879px;top:181px;" width="9" height="5" viewBox="0 0 9 5"><path d="M0.6 0.6 L4.5 4.4 L8.4 0.6" fill="none" stroke="#262626" stroke-width="1.1"/></svg>
<svg class="r" style="left:1901px;top:179px;" width="8" height="8" viewBox="0 0 8 8"><path d="M0.7 0.8 L7.3 7.4 M7.3 0.8 L0.7 7.4" stroke="#262626" stroke-width="1"/></svg>
<div class="r" style="left:218px;top:197px;width:1667px;height:42px;background:#f3f3f3;"></div>
<div class="r" style="left:218px;top:239px;width:1667px;height:1px;background:#e9e9e9;"></div>
<div class="t" style="left:224px;top:214.03px;font-size:10.6px;line-height:10.6px;color:#a3a3a3;">Ziehen Sie eine Spaltenüberschrift in diesen Bereich, um nach dieser zu gruppieren</div>
<svg class="r" style="left:1856px;top:206px;" width="13" height="13" viewBox="0 0 13 13"><circle cx="7.8" cy="5.2" r="4.5" fill="none" stroke="#262626" stroke-width="1.2"/><path d="M4.6 8.4 L0.8 12.2" stroke="#262626" stroke-width="1.3"/></svg>
<div class="r" style="left:218px;top:240px;width:1667px;height:766px;background:#ffffff;"></div>
<div class="r" style="left:218px;top:240px;width:1667px;height:24px;background:#fafafa;"></div>
<div class="r" style="left:218px;top:264px;width:1667px;height:1px;background:#dadada;"></div>
<div class="r" style="left:218px;top:287px;width:1667px;height:1px;background:#e8e8e8;"></div>
<div class="r" style="left:241px;top:240px;width:1px;height:24px;background:#e3e3e3;"></div>
<div class="r" style="left:241px;top:265px;width:1px;height:22px;background:#ededed;"></div>
<div class="r" style="left:355px;top:240px;width:1px;height:24px;background:#e3e3e3;"></div>
<div class="r" style="left:355px;top:265px;width:1px;height:22px;background:#ededed;"></div>
<div class="r" style="left:488px;top:240px;width:1px;height:24px;background:#e3e3e3;"></div>
<div class="r" style="left:488px;top:265px;width:1px;height:22px;background:#ededed;"></div>
<div class="r" style="left:596px;top:240px;width:1px;height:24px;background:#e3e3e3;"></div>
<div class="r" style="left:596px;top:265px;width:1px;height:22px;background:#ededed;"></div>
<div class="r" style="left:703px;top:240px;width:1px;height:24px;background:#e3e3e3;"></div>
<div class="r" style="left:703px;top:265px;width:1px;height:22px;background:#ededed;"></div>
<div class="r" style="left:903px;top:240px;width:1px;height:24px;background:#e3e3e3;"></div>
<div class="r" style="left:903px;top:265px;width:1px;height:22px;background:#ededed;"></div>
<div class="r" style="left:1188px;top:240px;width:1px;height:24px;background:#e3e3e3;"></div>
<div class="r" style="left:1188px;top:265px;width:1px;height:22px;background:#ededed;"></div>
<div class="r" style="left:1289px;top:240px;width:1px;height:24px;background:#e3e3e3;"></div>
<div class="r" style="left:1289px;top:265px;width:1px;height:22px;background:#ededed;"></div>
<div class="r" style="left:1430px;top:240px;width:1px;height:24px;background:#e3e3e3;"></div>
<div class="r" style="left:1430px;top:265px;width:1px;height:22px;background:#ededed;"></div>
<div class="r" style="left:1571px;top:240px;width:1px;height:24px;background:#e3e3e3;"></div>
<div class="r" style="left:1571px;top:265px;width:1px;height:22px;background:#ededed;"></div>
<div class="r" style="left:1702px;top:240px;width:1px;height:24px;background:#e3e3e3;"></div>
<div class="r" style="left:1702px;top:265px;width:1px;height:22px;background:#ededed;"></div>
<div class="t" style="left:247px;top:247.03px;font-size:10.6px;line-height:10.6px;color:#1f1f1f;">Status</div>
<div class="t" style="left:361px;top:247.03px;font-size:10.6px;line-height:10.6px;color:#1f1f1f;">Belegtyp</div>
<div class="t" style="left:494px;top:247.03px;font-size:10.6px;line-height:10.6px;color:#1f1f1f;">Belegnummer</div>
<div class="t" style="left:602px;top:247.03px;font-size:10.6px;line-height:10.6px;color:#1f1f1f;">Belegdatum</div>
<div class="t" style="left:709px;top:247.03px;font-size:10.6px;line-height:10.6px;color:#1f1f1f;">Kunde</div>
<div class="t" style="left:909px;top:247.03px;font-size:10.6px;line-height:10.6px;color:#1f1f1f;">Betreff</div>
<div class="t" style="left:1194px;top:247.03px;font-size:10.6px;line-height:10.6px;color:#1f1f1f;">Währung</div>
<div class="t" style="left:1295px;top:247.03px;font-size:10.6px;line-height:10.6px;color:#1f1f1f;">Netto</div>
<div class="t" style="left:1436px;top:247.03px;font-size:10.6px;line-height:10.6px;color:#1f1f1f;">AC %</div>
<div class="t" style="left:1577px;top:247.03px;font-size:10.6px;line-height:10.6px;color:#1f1f1f;">Gültig bis</div>
<div class="t" style="left:1708px;top:247.03px;font-size:10.6px;line-height:10.6px;color:#1f1f1f;">Druck</div>
<svg class="r" style="left:224px;top:272px;" width="11" height="10" viewBox="0 0 11 10"><path d="M0.6 0.6 H10.4 L6.4 5 V9.5 H4.6 V5 Z" fill="none" stroke="#3d4246" stroke-width="1.1" stroke-linejoin="round"/></svg>
<div class="r" style="left:248px;top:275px;width:9px;height:1px;background:#2b2b2b;"></div>
<div class="r" style="left:248px;top:278px;width:9px;height:1px;background:#2b2b2b;"></div>
<div class="r" style="left:362px;top:275px;width:9px;height:1px;background:#2b2b2b;"></div>
<div class="r" style="left:362px;top:278px;width:9px;height:1px;background:#2b2b2b;"></div>
<svg class="r" style="left:491px;top:271px;" width="17" height="11" viewBox="0 0 17 11"><path d="M1.1 8 V3.3 H3.9 V8 M1.1 5.6 H3.9" fill="none" stroke="#2b2b2b" stroke-width="1.15"/><rect x="5" y="0" width="7" height="11" rx="1" fill="#127a68"/><rect x="7" y="3" width="3" height="5" fill="#c8fbf5"/><rect x="8" y="4" width="1" height="1" fill="#127a68"/><rect x="8" y="6" width="1" height="1" fill="#127a68"/><path d="M15.8 3.3 H13.6 V7.6 H15.8" fill="none" stroke="#2b2b2b" stroke-width="1.15"/></svg>
<div class="r" style="left:603px;top:275px;width:9px;height:1px;background:#2b2b2b;"></div>
<div class="r" style="left:603px;top:278px;width:9px;height:1px;background:#2b2b2b;"></div>
<svg class="r" style="left:706px;top:271px;" width="17" height="11" viewBox="0 0 17 11"><path d="M1.1 8 V3.3 H3.9 V8 M1.1 5.6 H3.9" fill="none" stroke="#2b2b2b" stroke-width="1.15"/><rect x="5" y="0" width="7" height="11" rx="1" fill="#127a68"/><rect x="7" y="3" width="3" height="5" fill="#c8fbf5"/><rect x="8" y="4" width="1" height="1" fill="#127a68"/><rect x="8" y="6" width="1" height="1" fill="#127a68"/><path d="M15.8 3.3 H13.6 V7.6 H15.8" fill="none" stroke="#2b2b2b" stroke-width="1.15"/></svg>
<svg class="r" style="left:906px;top:271px;" width="17" height="11" viewBox="0 0 17 11"><path d="M1.1 8 V3.3 H3.9 V8 M1.1 5.6 H3.9" fill="none" stroke="#2b2b2b" stroke-width="1.15"/><rect x="5" y="0" width="7" height="11" rx="1" fill="#127a68"/><rect x="7" y="3" width="3" height="5" fill="#c8fbf5"/><rect x="8" y="4" width="1" height="1" fill="#127a68"/><rect x="8" y="6" width="1" height="1" fill="#127a68"/><path d="M15.8 3.3 H13.6 V7.6 H15.8" fill="none" stroke="#2b2b2b" stroke-width="1.15"/></svg>
<div class="r" style="left:1195px;top:275px;width:9px;height:1px;background:#2b2b2b;"></div>
<div class="r" style="left:1195px;top:278px;width:9px;height:1px;background:#2b2b2b;"></div>
<div class="r" style="left:1296px;top:275px;width:9px;height:1px;background:#2b2b2b;"></div>
<div class="r" style="left:1296px;top:278px;width:9px;height:1px;background:#2b2b2b;"></div>
<div class="r" style="left:1578px;top:275px;width:9px;height:1px;background:#2b2b2b;"></div>
<div class="r" style="left:1578px;top:278px;width:9px;height:1px;background:#2b2b2b;"></div>
<div class="r" style="left:1786px;top:268px;width:16px;height:16px;background:#0f62bd;border-radius:3px;"></div>
<div class="r" style="left:1790px;top:275px;width:8px;height:1.4px;background:#ffffff;"></div>
<div class="r" style="left:241px;top:288px;width:1644px;height:22px;background:#e8f3fd;"></div>
<div class="r" style="left:241px;top:310px;width:1644px;height:1px;background:#e6e6e6;"></div>
<div class="r" style="left:355px;top:288px;width:1px;height:22px;background:#e9e9e9;"></div>
<div class="r" style="left:488px;top:288px;width:1px;height:22px;background:#e9e9e9;"></div>
<div class="r" style="left:596px;top:288px;width:1px;height:22px;background:#e9e9e9;"></div>
<div class="r" style="left:703px;top:288px;width:1px;height:22px;background:#e9e9e9;"></div>
<div class="r" style="left:903px;top:288px;width:1px;height:22px;background:#e9e9e9;"></div>
<div class="r" style="left:1188px;top:288px;width:1px;height:22px;background:#e9e9e9;"></div>
<div class="r" style="left:1289px;top:288px;width:1px;height:22px;background:#e9e9e9;"></div>
<div class="r" style="left:1430px;top:288px;width:1px;height:22px;background:#e9e9e9;"></div>
<div class="r" style="left:1571px;top:288px;width:1px;height:22px;background:#e9e9e9;"></div>
<div class="r" style="left:1702px;top:288px;width:1px;height:22px;background:#e9e9e9;"></div>
<svg class="r" style="left:227px;top:295px;" width="7" height="9" viewBox="0 0 7 9"><path d="M0.6 0.6 L6 4.5 L0.6 8.4 Z" fill="none" stroke="#555" stroke-width="1"/></svg>
<svg class="r" style="left:250px;top:294px;" width="9" height="9" viewBox="0 0 9 9"><rect x="0.5" y="0.5" width="8" height="8" fill="none" stroke="#262626"/><path d="M4.5 2 V7 M2 4.5 H7" stroke="#262626"/></svg>
<svg class="r" style="left:272px;top:292px;" width="14" height="14" viewBox="0 0 14 14"><circle cx="7" cy="7" r="7" fill="#178574"/><path d="M3.3 7.2 L6 9.8 L10.8 4.6" fill="none" stroke="#fff" stroke-width="1.9"/></svg>
<div class="t" style="left:292.5px;top:294.03px;font-size:10.6px;line-height:10.6px;color:#1f1f1f;">erledigt</div>
<svg class="r" style="left:362px;top:294px;" width="12" height="12" viewBox="0 0 12 12"><rect x="0" y="0" width="2" height="12" fill="#3d4246"/><rect x="10" y="0" width="2" height="12" fill="#3d4246"/><rect x="0" y="10" width="12" height="2" fill="#3d4246"/><rect x="0" y="5.5" width="12" height="2" fill="#3d4246"/><rect x="3.2" y="0.2" width="3.3" height="3.6" fill="none" stroke="#3d4246" stroke-width="1.2"/></svg>
<div class="t" style="left:381px;top:294.03px;font-size:10.6px;line-height:10.6px;color:#1f1f1f;">Leistungsverzeichnis</div>
<div class="t" style="left:492.5px;top:293.77px;font-size:10.9px;line-height:10.9px;color:#1f1f1f;">00013</div>
<div class="t" style="left:600.5px;top:293.69px;font-size:11px;line-height:11px;color:#1f1f1f;">09.12.2019</div>
<div class="t" style="left:707px;top:294.03px;font-size:10.6px;line-height:10.6px;color:#1f1f1f;">PraKom Software GmbH</div>
<div class="t" style="left:907px;top:294.03px;font-size:10.6px;line-height:10.6px;color:#1f1f1f;">HKLS - LG</div>
<div class="t" style="left:1192.5px;top:294.03px;font-size:10.6px;line-height:10.6px;color:#1f1f1f;">Euro</div>
<div class="t" style="right:495px;top:293.69px;font-size:11px;line-height:11px;color:#1f1f1f;text-align:right;">€ 27.742,00</div>
<div class="r" style="left:1786px;top:291px;width:16px;height:16px;background:#ffffff;border:1px solid #cfcfcf;border-radius:3px;box-sizing:border-box;"></div>
<div class="r" style="left:241px;top:311px;width:1644px;height:22px;background:#f3f3f3;"></div>
<div class="r" style="left:241px;top:333px;width:1644px;height:1px;background:#e6e6e6;"></div>
<div class="r" style="left:355px;top:311px;width:1px;height:22px;background:#e9e9e9;"></div>
<div class="r" style="left:488px;top:311px;width:1px;height:22px;background:#e9e9e9;"></div>
<div class="r" style="left:596px;top:311px;width:1px;height:22px;background:#e9e9e9;"></div>
<div class="r" style="left:703px;top:311px;width:1px;height:22px;background:#e9e9e9;"></div>
<div class="r" style="left:903px;top:311px;width:1px;height:22px;background:#e9e9e9;"></div>
<div class="r" style="left:1188px;top:311px;width:1px;height:22px;background:#e9e9e9;"></div>
<div class="r" style="left:1289px;top:311px;width:1px;height:22px;background:#e9e9e9;"></div>
<div class="r" style="left:1430px;top:311px;width:1px;height:22px;background:#e9e9e9;"></div>
<div class="r" style="left:1571px;top:311px;width:1px;height:22px;background:#e9e9e9;"></div>
<div class="r" style="left:1702px;top:311px;width:1px;height:22px;background:#e9e9e9;"></div>
<svg class="r" style="left:250px;top:317px;" width="9" height="9" viewBox="0 0 9 9"><rect x="0.5" y="0.5" width="8" height="8" fill="none" stroke="#262626"/><path d="M4.5 2 V7 M2 4.5 H7" stroke="#262626"/></svg>
<svg class="r" style="left:272px;top:315px;" width="14" height="14" viewBox="0 0 14 14"><circle cx="7" cy="7" r="7" fill="#178574"/><path d="M3.3 7.2 L6 9.8 L10.8 4.6" fill="none" stroke="#fff" stroke-width="1.9"/></svg>
<div class="t" style="left:292.5px;top:317.03px;font-size:10.6px;line-height:10.6px;color:#8a8a8a;">erledigt</div>
<svg class="r" style="left:362px;top:315px;" width="12" height="14" viewBox="0 0 12 14"><path d="M0.6 0.6 H8.4 L11.4 3.6 V13.4 H0.6 Z" fill="#fff" stroke="#3d4246" stroke-width="1.2"/><path d="M8.5 0.5 L11.5 3.5 L8.5 3.5 Z" fill="#3d4246"/><rect x="2" y="2" width="3" height="1" fill="#3d4246"/><rect x="2" y="4.2" width="3" height="1" fill="#3d4246"/><rect x="2" y="7" width="8" height="1" fill="#3d4246"/><rect x="2" y="9" width="7" height="1" fill="#3d4246"/><rect x="2" y="11" width="3" height="1" fill="#3d4246"/></svg>
<div class="t" style="left:381px;top:317.03px;font-size:10.6px;line-height:10.6px;color:#1f1f1f;">Standard</div>
<div class="t" style="left:492.5px;top:316.77px;font-size:10.9px;line-height:10.9px;color:#1f1f1f;">00011</div>
<div class="t" style="left:600.5px;top:316.69px;font-size:11px;line-height:11px;color:#1f1f1f;">29.10.2019</div>
<div class="t" style="left:707px;top:317.03px;font-size:10.6px;line-height:10.6px;color:#1f1f1f;">Testmann Hugo GmbH</div>
<div class="t" style="left:907px;top:317.03px;font-size:10.6px;line-height:10.6px;color:#1f1f1f;">Elektroarbeiten</div>
<div class="t" style="left:1192.5px;top:317.03px;font-size:10.6px;line-height:10.6px;color:#1f1f1f;">Euro</div>
<div class="t" style="right:495px;top:316.69px;font-size:11px;line-height:11px;color:#1f1f1f;text-align:right;">€ 6.450,00</div>
<div class="r" style="left:1435px;top:315px;width:131px;height:14px;background:#0467c6;border:1px solid #0d569e;border-radius:1.5px;box-sizing:border-box;"></div>
<div class="r" style="left:1786px;top:314px;width:16px;height:16px;background:#ffffff;border:1px solid #cfcfcf;border-radius:3px;box-sizing:border-box;"></div>
<div class="r" style="left:241px;top:334px;width:1644px;height:22px;background:#ffffff;"></div>
<div class="r" style="left:241px;top:356px;width:1644px;height:1px;background:#e6e6e6;"></div>
<div class="r" style="left:355px;top:334px;width:1px;height:22px;background:#e9e9e9;"></div>
<div class="r" style="left:488px;top:334px;width:1px;height:22px;background:#e9e9e9;"></div>
<div class="r" style="left:596px;top:334px;width:1px;height:22px;background:#e9e9e9;"></div>
<div class="r" style="left:703px;top:334px;width:1px;height:22px;background:#e9e9e9;"></div>
<div class="r" style="left:903px;top:334px;width:1px;height:22px;background:#e9e9e9;"></div>
<div class="r" style="left:1188px;top:334px;width:1px;height:22px;background:#e9e9e9;"></div>
<div class="r" style="left:1289px;top:334px;width:1px;height:22px;background:#e9e9e9;"></div>
<div class="r" style="left:1430px;top:334px;width:1px;height:22px;background:#e9e9e9;"></div>
<div class="r" style="left:1571px;top:334px;width:1px;height:22px;background:#e9e9e9;"></div>
<div class="r" style="left:1702px;top:334px;width:1px;height:22px;background:#e9e9e9;"></div>
<svg class="r" style="left:250px;top:340px;" width="9" height="9" viewBox="0 0 9 9"><rect x="0.5" y="0.5" width="8" height="8" fill="none" stroke="#262626"/><path d="M4.5 2 V7 M2 4.5 H7" stroke="#262626"/></svg>
<svg class="r" style="left:274px;top:338px;" width="10" height="14" viewBox="0 0 10 14"><path d="M1 2.5 H9 V12.5 Q9 13.5 8 13.5 H2 Q1 13.5 1 12.5 Z" fill="#fffdf6" stroke="#f2ac55" stroke-width="1.1"/><path d="M2.8 3 V1.8 Q5 -0.6 7.2 1.8 V3 Z" fill="#fff" stroke="#5f7478" stroke-width="1.1"/><rect x="0.5" y="11.6" width="9" height="2.2" rx="0.8" fill="#eea24a"/></svg>
<div class="t" style="left:292.5px;top:340.03px;font-size:10.6px;line-height:10.6px;color:#1f1f1f;">offen</div>
<svg class="r" style="left:362px;top:338px;" width="12" height="14" viewBox="0 0 12 14"><path d="M0.6 0.6 H8.4 L11.4 3.6 V13.4 H0.6 Z" fill="#fff" stroke="#3d4246" stroke-width="1.2"/><path d="M8.5 0.5 L11.5 3.5 L8.5 3.5 Z" fill="#3d4246"/><rect x="2" y="2" width="3" height="1" fill="#3d4246"/><rect x="2" y="4.2" width="3" height="1" fill="#3d4246"/><rect x="2" y="7" width="8" height="1" fill="#3d4246"/><rect x="2" y="9" width="7" height="1" fill="#3d4246"/><rect x="2" y="11" width="3" height="1" fill="#3d4246"/></svg>
<div class="t" style="left:381px;top:340.03px;font-size:10.6px;line-height:10.6px;color:#1f1f1f;">Standard</div>
<div class="t" style="left:492.5px;top:339.77px;font-size:10.9px;line-height:10.9px;color:#1f1f1f;">00010</div>
<div class="t" style="left:600.5px;top:339.69px;font-size:11px;line-height:11px;color:#1f1f1f;">09.09.2019</div>
<div class="t" style="left:707px;top:340.03px;font-size:10.6px;line-height:10.6px;color:#1f1f1f;">Devex Hans</div>
<div class="t" style="left:907px;top:340.03px;font-size:10.6px;line-height:10.6px;color:#1f1f1f;">Bau EFH</div>
<div class="t" style="left:1192.5px;top:340.03px;font-size:10.6px;line-height:10.6px;color:#1f1f1f;">Euro</div>
<div class="t" style="right:495px;top:339.69px;font-size:11px;line-height:11px;color:#1f1f1f;text-align:right;">€ 213.898,00</div>
<div class="r" style="left:1435px;top:338px;width:123px;height:14px;background:#0467c6;border:1px solid #0d569e;border-radius:1.5px;box-sizing:border-box;"></div>
<div class="r" style="left:1786px;top:337px;width:16px;height:16px;background:#ffffff;border:1px solid #cfcfcf;border-radius:3px;box-sizing:border-box;"></div>
<div class="r" style="left:241px;top:357px;width:1644px;height:22px;background:#f3f3f3;"></div>
<div class="r" style="left:241px;top:379px;width:1644px;height:1px;background:#e6e6e6;"></div>
<div class="r" style="left:355px;top:357px;width:1px;height:22px;background:#e9e9e9;"></div>
<div class="r" style="left:488px;top:357px;width:1px;height:22px;background:#e9e9e9;"></div>
<div class="r" style="left:596px;top:357px;width:1px;height:22px;background:#e9e9e9;"></div>
<div class="r" style="left:703px;top:357px;width:1px;height:22px;background:#e9e9e9;"></div>
<div class="r" style="left:903px;top:357px;width:1px;height:22px;background:#e9e9e9;"></div>
<div class="r" style="left:1188px;top:357px;width:1px;height:22px;background:#e9e9e9;"></div>
<div class="r" style="left:1289px;top:357px;width:1px;height:22px;background:#e9e9e9;"></div>
<div class="r" style="left:1430px;top:357px;width:1px;height:22px;background:#e9e9e9;"></div>
<div class="r" style="left:1571px;top:357px;width:1px;height:22px;background:#e9e9e9;"></div>
<div class="r" style="left:1702px;top:357px;width:1px;height:22px;background:#e9e9e9;"></div>
<svg class="r" style="left:250px;top:363px;" width="9" height="9" viewBox="0 0 9 9"><rect x="0.5" y="0.5" width="8" height="8" fill="none" stroke="#262626"/><path d="M4.5 2 V7 M2 4.5 H7" stroke="#262626"/></svg>
<svg class="r" style="left:274px;top:361px;" width="10" height="14" viewBox="0 0 10 14"><path d="M1 2.5 H9 V12.5 Q9 13.5 8 13.5 H2 Q1 13.5 1 12.5 Z" fill="#fffdf6" stroke="#f2ac55" stroke-width="1.1"/><path d="M2.8 3 V1.8 Q5 -0.6 7.2 1.8 V3 Z" fill="#fff" stroke="#5f7478" stroke-width="1.1"/><rect x="0.5" y="11.6" width="9" height="2.2" rx="0.8" fill="#eea24a"/></svg>
<div class="t" style="left:292.5px;top:363.03px;font-size:10.6px;line-height:10.6px;color:#1f1f1f;">offen</div>
<svg class="r" style="left:362px;top:361px;" width="12" height="14" viewBox="0 0 12 14"><path d="M0.6 0.6 H8.4 L11.4 3.6 V13.4 H0.6 Z" fill="#fff" stroke="#3d4246" stroke-width="1.2"/><path d="M8.5 0.5 L11.5 3.5 L8.5 3.5 Z" fill="#3d4246"/><rect x="2" y="2" width="3" height="1" fill="#3d4246"/><rect x="2" y="4.2" width="3" height="1" fill="#3d4246"/><rect x="2" y="7" width="8" height="1" fill="#3d4246"/><rect x="2" y="9" width="7" height="1" fill="#3d4246"/><rect x="2" y="11" width="3" height="1" fill="#3d4246"/></svg>
<div class="t" style="left:381px;top:363.03px;font-size:10.6px;line-height:10.6px;color:#1f1f1f;">Standard</div>
<div class="t" style="left:492.5px;top:362.77px;font-size:10.9px;line-height:10.9px;color:#1f1f1f;">00009</div>
<div class="t" style="left:600.5px;top:362.69px;font-size:11px;line-height:11px;color:#1f1f1f;">22.07.2019</div>
<div class="t" style="left:707px;top:363.03px;font-size:10.6px;line-height:10.6px;color:#1f1f1f;">Elektro Mustermann GmbH</div>
<div class="t" style="left:907px;top:363.03px;font-size:10.6px;line-height:10.6px;color:#1f1f1f;">Umbau Bad</div>
<div class="t" style="left:1192.5px;top:363.03px;font-size:10.6px;line-height:10.6px;color:#1f1f1f;">Euro</div>
<div class="t" style="right:495px;top:362.69px;font-size:11px;line-height:11px;color:#1f1f1f;text-align:right;">€ 7.650,00</div>
<div class="r" style="left:1435px;top:361px;width:77px;height:14px;background:#0467c6;border:1px solid #0d569e;border-radius:1.5px;box-sizing:border-box;"></div>
<div class="r" style="left:1786px;top:360px;width:16px;height:16px;background:#ffffff;border:1px solid #cfcfcf;border-radius:3px;box-sizing:border-box;"></div>
<div class="r" style="left:241px;top:380px;width:1644px;height:22px;background:#ffffff;"></div>
<div class="r" style="left:241px;top:402px;width:1644px;height:1px;background:#e6e6e6;"></div>
<div class="r" style="left:355px;top:380px;width:1px;height:22px;background:#e9e9e9;"></div>
<div class="r" style="left:488px;top:380px;width:1px;height:22px;background:#e9e9e9;"></div>
<div class="r" style="left:596px;top:380px;width:1px;height:22px;background:#e9e9e9;"></div>
<div class="r" style="left:703px;top:380px;width:1px;height:22px;background:#e9e9e9;"></div>
<div class="r" style="left:903px;top:380px;width:1px;height:22px;background:#e9e9e9;"></div>
<div class="r" style="left:1188px;top:380px;width:1px;height:22px;background:#e9e9e9;"></div>
<div class="r" style="left:1289px;top:380px;width:1px;height:22px;background:#e9e9e9;"></div>
<div class="r" style="left:1430px;top:380px;width:1px;height:22px;background:#e9e9e9;"></div>
<div class="r" style="left:1571px;top:380px;width:1px;height:22px;background:#e9e9e9;"></div>
<div class="r" style="left:1702px;top:380px;width:1px;height:22px;background:#e9e9e9;"></div>
<svg class="r" style="left:250px;top:386px;" width="9" height="9" viewBox="0 0 9 9"><rect x="0.5" y="0.5" width="8" height="8" fill="none" stroke="#262626"/><path d="M4.5 2 V7 M2 4.5 H7" stroke="#262626"/></svg>
<svg class="r" style="left:274px;top:384px;" width="10" height="14" viewBox="0 0 10 14"><path d="M1 2.5 H9 V12.5 Q9 13.5 8 13.5 H2 Q1 13.5 1 12.5 Z" fill="#fffdf6" stroke="#f2ac55" stroke-width="1.1"/><path d="M2.8 3 V1.8 Q5 -0.6 7.2 1.8 V3 Z" fill="#fff" stroke="#5f7478" stroke-width="1.1"/><rect x="0.5" y="11.6" width="9" height="2.2" rx="0.8" fill="#eea24a"/></svg>
<div class="t" style="left:292.5px;top:386.03px;font-size:10.6px;line-height:10.6px;color:#1f1f1f;">offen</div>
<svg class="r" style="left:362px;top:384px;" width="12" height="14" viewBox="0 0 12 14"><path d="M0.6 0.6 H8.4 L11.4 3.6 V13.4 H0.6 Z" fill="#fff" stroke="#3d4246" stroke-width="1.2"/><path d="M8.5 0.5 L11.5 3.5 L8.5 3.5 Z" fill="#3d4246"/><rect x="2" y="2" width="3" height="1" fill="#3d4246"/><rect x="2" y="4.2" width="3" height="1" fill="#3d4246"/><rect x="2" y="7" width="8" height="1" fill="#3d4246"/><rect x="2" y="9" width="7" height="1" fill="#3d4246"/><rect x="2" y="11" width="3" height="1" fill="#3d4246"/></svg>
<div class="t" style="left:381px;top:386.03px;font-size:10.6px;line-height:10.6px;color:#1f1f1f;">Standard</div>
<div class="t" style="left:492.5px;top:385.77px;font-size:10.9px;line-height:10.9px;color:#1f1f1f;">00008-1</div>
<div class="t" style="left:600.5px;top:385.69px;font-size:11px;line-height:11px;color:#1f1f1f;">03.06.2019</div>
<div class="t" style="left:707px;top:386.03px;font-size:10.6px;line-height:10.6px;color:#1f1f1f;">PraKom Software GmbH</div>
<div class="t" style="left:907px;top:386.03px;font-size:10.6px;line-height:10.6px;color:#1f1f1f;">Umbau Bürogebäude</div>
<div class="t" style="left:1192.5px;top:386.03px;font-size:10.6px;line-height:10.6px;color:#1f1f1f;">Euro</div>
<div class="t" style="right:495px;top:385.69px;font-size:11px;line-height:11px;color:#1f1f1f;text-align:right;">€ 25.393,75</div>
<div class="r" style="left:1435px;top:384px;width:110px;height:14px;background:#0467c6;border:1px solid #0d569e;border-radius:1.5px;box-sizing:border-box;"></div>
<div class="r" style="left:1786px;top:383px;width:16px;height:16px;background:#ffffff;border:1px solid #cfcfcf;border-radius:3px;box-sizing:border-box;"></div>
<div class="r" style="left:241px;top:403px;width:1644px;height:22px;background:#f3f3f3;"></div>
<div class="r" style="left:241px;top:425px;width:1644px;height:1px;background:#e6e6e6;"></div>
<div class="r" style="left:355px;top:403px;width:1px;height:22px;background:#e9e9e9;"></div>
<div class="r" style="left:488px;top:403px;width:1px;height:22px;background:#e9e9e9;"></div>
<div class="r" style="left:596px;top:403px;width:1px;height:22px;background:#e9e9e9;"></div>
<div class="r" style="left:703px;top:403px;width:1px;height:22px;background:#e9e9e9;"></div>
<div class="r" style="left:903px;top:403px;width:1px;height:22px;background:#e9e9e9;"></div>
<div class="r" style="left:1188px;top:403px;width:1px;height:22px;background:#e9e9e9;"></div>
<div class="r" style="left:1289px;top:403px;width:1px;height:22px;background:#e9e9e9;"></div>
<div class="r" style="left:1430px;top:403px;width:1px;height:22px;background:#e9e9e9;"></div>
<div class="r" style="left:1571px;top:403px;width:1px;height:22px;background:#e9e9e9;"></div>
<div class="r" style="left:1702px;top:403px;width:1px;height:22px;background:#e9e9e9;"></div>
<svg class="r" style="left:250px;top:409px;" width="9" height="9" viewBox="0 0 9 9"><rect x="0.5" y="0.5" width="8" height="8" fill="none" stroke="#262626"/><path d="M4.5 2 V7 M2 4.5 H7" stroke="#262626"/></svg>
<svg class="r" style="left:272px;top:407px;" width="14" height="14" viewBox="0 0 14 14"><circle cx="7" cy="7" r="6" fill="none" stroke="#d94a62" stroke-width="2"/><path d="M2.8 11.2 L11.2 2.8" stroke="#d94a62" stroke-width="2"/></svg>
<div class="t" style="left:292.5px;top:409.03px;font-size:10.6px;line-height:10.6px;color:#1f1f1f;">storniert</div>
<svg class="r" style="left:362px;top:407px;" width="12" height="14" viewBox="0 0 12 14"><path d="M0.6 0.6 H8.4 L11.4 3.6 V13.4 H0.6 Z" fill="#fff" stroke="#3d4246" stroke-width="1.2"/><path d="M8.5 0.5 L11.5 3.5 L8.5 3.5 Z" fill="#3d4246"/><rect x="2" y="2" width="3" height="1" fill="#3d4246"/><rect x="2" y="4.2" width="3" height="1" fill="#3d4246"/><rect x="2" y="7" width="8" height="1" fill="#3d4246"/><rect x="2" y="9" width="7" height="1" fill="#3d4246"/><rect x="2" y="11" width="3" height="1" fill="#3d4246"/></svg>
<div class="t" style="left:381px;top:409.03px;font-size:10.6px;line-height:10.6px;color:#1f1f1f;">Standard</div>
<div class="t" style="left:492.5px;top:408.77px;font-size:10.9px;line-height:10.9px;color:#1f1f1f;">00008</div>
<div class="t" style="left:600.5px;top:408.69px;font-size:11px;line-height:11px;color:#1f1f1f;">20.05.2019</div>
<div class="t" style="left:707px;top:409.03px;font-size:10.6px;line-height:10.6px;color:#1f1f1f;">PraKom Software GmbH</div>
<div class="t" style="left:907px;top:409.03px;font-size:10.6px;line-height:10.6px;color:#1f1f1f;">Umbau Bürogebäude</div>
<div class="t" style="left:1192.5px;top:409.03px;font-size:10.6px;line-height:10.6px;color:#1f1f1f;">Euro</div>
<div class="t" style="right:495px;top:408.69px;font-size:11px;line-height:11px;color:#1f1f1f;text-align:right;">€ 29.875,00</div>
<div class="r" style="left:1435px;top:407px;width:39px;height:14px;background:#0467c6;border:1px solid #0d569e;border-radius:1.5px;box-sizing:border-box;"></div>
<div class="r" style="left:1786px;top:406px;width:16px;height:16px;background:#ffffff;border:1px solid #cfcfcf;border-radius:3px;box-sizing:border-box;"></div>
<div class="r" style="left:241px;top:426px;width:1644px;height:22px;background:#ffffff;"></div>
<div class="r" style="left:241px;top:448px;width:1644px;height:1px;background:#e6e6e6;"></div>
<div class="r" style="left:355px;top:426px;width:1px;height:22px;background:#e9e9e9;"></div>
<div class="r" style="left:488px;top:426px;width:1px;height:22px;background:#e9e9e9;"></div>
<div class="r" style="left:596px;top:426px;width:1px;height:22px;background:#e9e9e9;"></div>
<div class="r" style="left:703px;top:426px;width:1px;height:22px;background:#e9e9e9;"></div>
<div class="r" style="left:903px;top:426px;width:1px;height:22px;background:#e9e9e9;"></div>
<div class="r" style="left:1188px;top:426px;width:1px;height:22px;background:#e9e9e9;"></div>
<div class="r" style="left:1289px;top:426px;width:1px;height:22px;background:#e9e9e9;"></div>
<div class="r" style="left:1430px;top:426px;width:1px;height:22px;background:#e9e9e9;"></div>
<div class="r" style="left:1571px;top:426px;width:1px;height:22px;background:#e9e9e9;"></div>
<div class="r" style="left:1702px;top:426px;width:1px;height:22px;background:#e9e9e9;"></div>
<svg class="r" style="left:250px;top:432px;" width="9" height="9" viewBox="0 0 9 9"><rect x="0.5" y="0.5" width="8" height="8" fill="none" stroke="#262626"/><path d="M4.5 2 V7 M2 4.5 H7" stroke="#262626"/></svg>
<svg class="r" style="left:274px;top:430px;" width="10" height="14" viewBox="0 0 10 14"><path d="M1 2.5 H9 V12.5 Q9 13.5 8 13.5 H2 Q1 13.5 1 12.5 Z" fill="#fffdf6" stroke="#f2ac55" stroke-width="1.1"/><path d="M2.8 3 V1.8 Q5 -0.6 7.2 1.8 V3 Z" fill="#fff" stroke="#5f7478" stroke-width="1.1"/><rect x="0.5" y="11.6" width="9" height="2.2" rx="0.8" fill="#eea24a"/></svg>
<div class="t" style="left:292.5px;top:432.03px;font-size:10.6px;line-height:10.6px;color:#1f1f1f;">offen</div>
<svg class="r" style="left:362px;top:432px;" width="12" height="12" viewBox="0 0 12 12"><rect x="0" y="0" width="2" height="12" fill="#3d4246"/><rect x="10" y="0" width="2" height="12" fill="#3d4246"/><rect x="0" y="10" width="12" height="2" fill="#3d4246"/><rect x="0" y="5.5" width="12" height="2" fill="#3d4246"/><rect x="3.2" y="0.2" width="3.3" height="3.6" fill="none" stroke="#3d4246" stroke-width="1.2"/></svg>
<div class="t" style="left:381px;top:432.03px;font-size:10.6px;line-height:10.6px;color:#1f1f1f;">Leistungsverzeichnis</div>
<div class="t" style="left:492.5px;top:431.77px;font-size:10.9px;line-height:10.9px;color:#1f1f1f;">00007</div>
<div class="t" style="left:600.5px;top:431.69px;font-size:11px;line-height:11px;color:#1f1f1f;">04.02.2019</div>
<div class="t" style="left:707px;top:432.03px;font-size:10.6px;line-height:10.6px;color:#1f1f1f;">Mustermann Max</div>
<div class="t" style="left:907px;top:432.03px;font-size:10.6px;line-height:10.6px;color:#1f1f1f;">Installationen EFH</div>
<div class="t" style="left:1192.5px;top:432.03px;font-size:10.6px;line-height:10.6px;color:#1f1f1f;">Euro</div>
<div class="t" style="right:495px;top:431.69px;font-size:11px;line-height:11px;color:#1f1f1f;text-align:right;">€ 66.353,00</div>
<div class="r" style="left:1435px;top:430px;width:98px;height:14px;background:#0467c6;border:1px solid #0d569e;border-radius:1.5px;box-sizing:border-box;"></div>
<div class="r" style="left:1786px;top:429px;width:16px;height:16px;background:#ffffff;border:1px solid #cfcfcf;border-radius:3px;box-sizing:border-box;"></div>
<div class="r" style="left:241px;top:449px;width:1644px;height:22px;background:#f3f3f3;"></div>
<div class="r" style="left:241px;top:471px;width:1644px;height:1px;background:#e6e6e6;"></div>
<div class="r" style="left:355px;top:449px;width:1px;height:22px;background:#e9e9e9;"></div>
<div class="r" style="left:488px;top:449px;width:1px;height:22px;background:#e9e9e9;"></div>
<div class="r" style="left:596px;top:449px;width:1px;height:22px;background:#e9e9e9;"></div>
<div class="r" style="left:703px;top:449px;width:1px;height:22px;background:#e9e9e9;"></div>
<div class="r" style="left:903px;top:449px;width:1px;height:22px;background:#e9e9e9;"></div>
<div class="r" style="left:1188px;top:449px;width:1px;height:22px;background:#e9e9e9;"></div>
<div class="r" style="left:1289px;top:449px;width:1px;height:22px;background:#e9e9e9;"></div>
<div class="r" style="left:1430px;top:449px;width:1px;height:22px;background:#e9e9e9;"></div>
<div class="r" style="left:1571px;top:449px;width:1px;height:22px;background:#e9e9e9;"></div>
<div class="r" style="left:1702px;top:449px;width:1px;height:22px;background:#e9e9e9;"></div>
<svg class="r" style="left:250px;top:455px;" width="9" height="9" viewBox="0 0 9 9"><rect x="0.5" y="0.5" width="8" height="8" fill="none" stroke="#262626"/><path d="M4.5 2 V7 M2 4.5 H7" stroke="#262626"/></svg>
<svg class="r" style="left:274px;top:453px;" width="10" height="14" viewBox="0 0 10 14"><path d="M1 2.5 H9 V12.5 Q9 13.5 8 13.5 H2 Q1 13.5 1 12.5 Z" fill="#fffdf6" stroke="#f2ac55" stroke-width="1.1"/><path d="M2.8 3 V1.8 Q5 -0.6 7.2 1.8 V3 Z" fill="#fff" stroke="#5f7478" stroke-width="1.1"/><rect x="0.5" y="11.6" width="9" height="2.2" rx="0.8" fill="#eea24a"/></svg>
<div class="t" style="left:292.5px;top:455.03px;font-size:10.6px;line-height:10.6px;color:#1f1f1f;">offen</div>
<svg class="r" style="left:362px;top:453px;" width="12" height="14" viewBox="0 0 12 14"><path d="M0.6 0.6 H8.4 L11.4 3.6 V13.4 H0.6 Z" fill="#fff" stroke="#3d4246" stroke-width="1.2"/><path d="M8.5 0.5 L11.5 3.5 L8.5 3.5 Z" fill="#3d4246"/><rect x="2" y="2" width="3" height="1" fill="#3d4246"/><rect x="2" y="4.2" width="3" height="1" fill="#3d4246"/><rect x="2" y="7" width="8" height="1" fill="#3d4246"/><rect x="2" y="9" width="7" height="1" fill="#3d4246"/><rect x="2" y="11" width="3" height="1" fill="#3d4246"/></svg>
<div class="t" style="left:381px;top:455.03px;font-size:10.6px;line-height:10.6px;color:#1f1f1f;">Standard</div>
<div class="t" style="left:492.5px;top:454.77px;font-size:10.9px;line-height:10.9px;color:#1f1f1f;">00006</div>
<div class="t" style="left:600.5px;top:454.69px;font-size:11px;line-height:11px;color:#1f1f1f;">21.10.2018</div>
<div class="t" style="left:707px;top:455.03px;font-size:10.6px;line-height:10.6px;color:#1f1f1f;">Testmann Hugo GmbH</div>
<div class="t" style="left:907px;top:455.03px;font-size:10.6px;line-height:10.6px;color:#1f1f1f;">Umbau Bürogebäude</div>
<div class="t" style="left:1192.5px;top:455.03px;font-size:10.6px;line-height:10.6px;color:#1f1f1f;">Euro</div>
<div class="t" style="right:495px;top:454.69px;font-size:11px;line-height:11px;color:#1f1f1f;text-align:right;">€ 67.380,00</div>
<div class="r" style="left:1435px;top:453px;width:58px;height:14px;background:#0467c6;border:1px solid #0d569e;border-radius:1.5px;box-sizing:border-box;"></div>
<div class="r" style="left:1786px;top:452px;width:16px;height:16px;background:#ffffff;border:1px solid #cfcfcf;border-radius:3px;box-sizing:border-box;"></div>
<div class="r" style="left:218px;top:1006px;width:1667px;height:1px;background:#dedede;"></div>
<div class="r" style="left:218px;top:1007px;width:1667px;height:40px;background:#f9f9f9;"></div>
<div class="r" style="left:0px;top:1047px;width:1920px;height:1px;background:#c9c9c9;"></div>
<div class="r" style="left:1885px;top:197px;width:1px;height:850px;background:#cfcfcf;"></div>
<svg class="r" style="left:1897px;top:213px;" width="13" height="10" viewBox="0 0 13 10"><path d="M12.5 0 V10 L7.5 6.2 H0 L2.5 5 L0 3.8 H7.5 Z" fill="#f5922a"/></svg>
<div class="t" style="left:1908px;top:228.5px;font-size:10.6px;line-height:10.6px;color:#1f1f1f;transform:rotate(90deg);transform-origin:0 0;">Filter Belege</div>
</body></html>
